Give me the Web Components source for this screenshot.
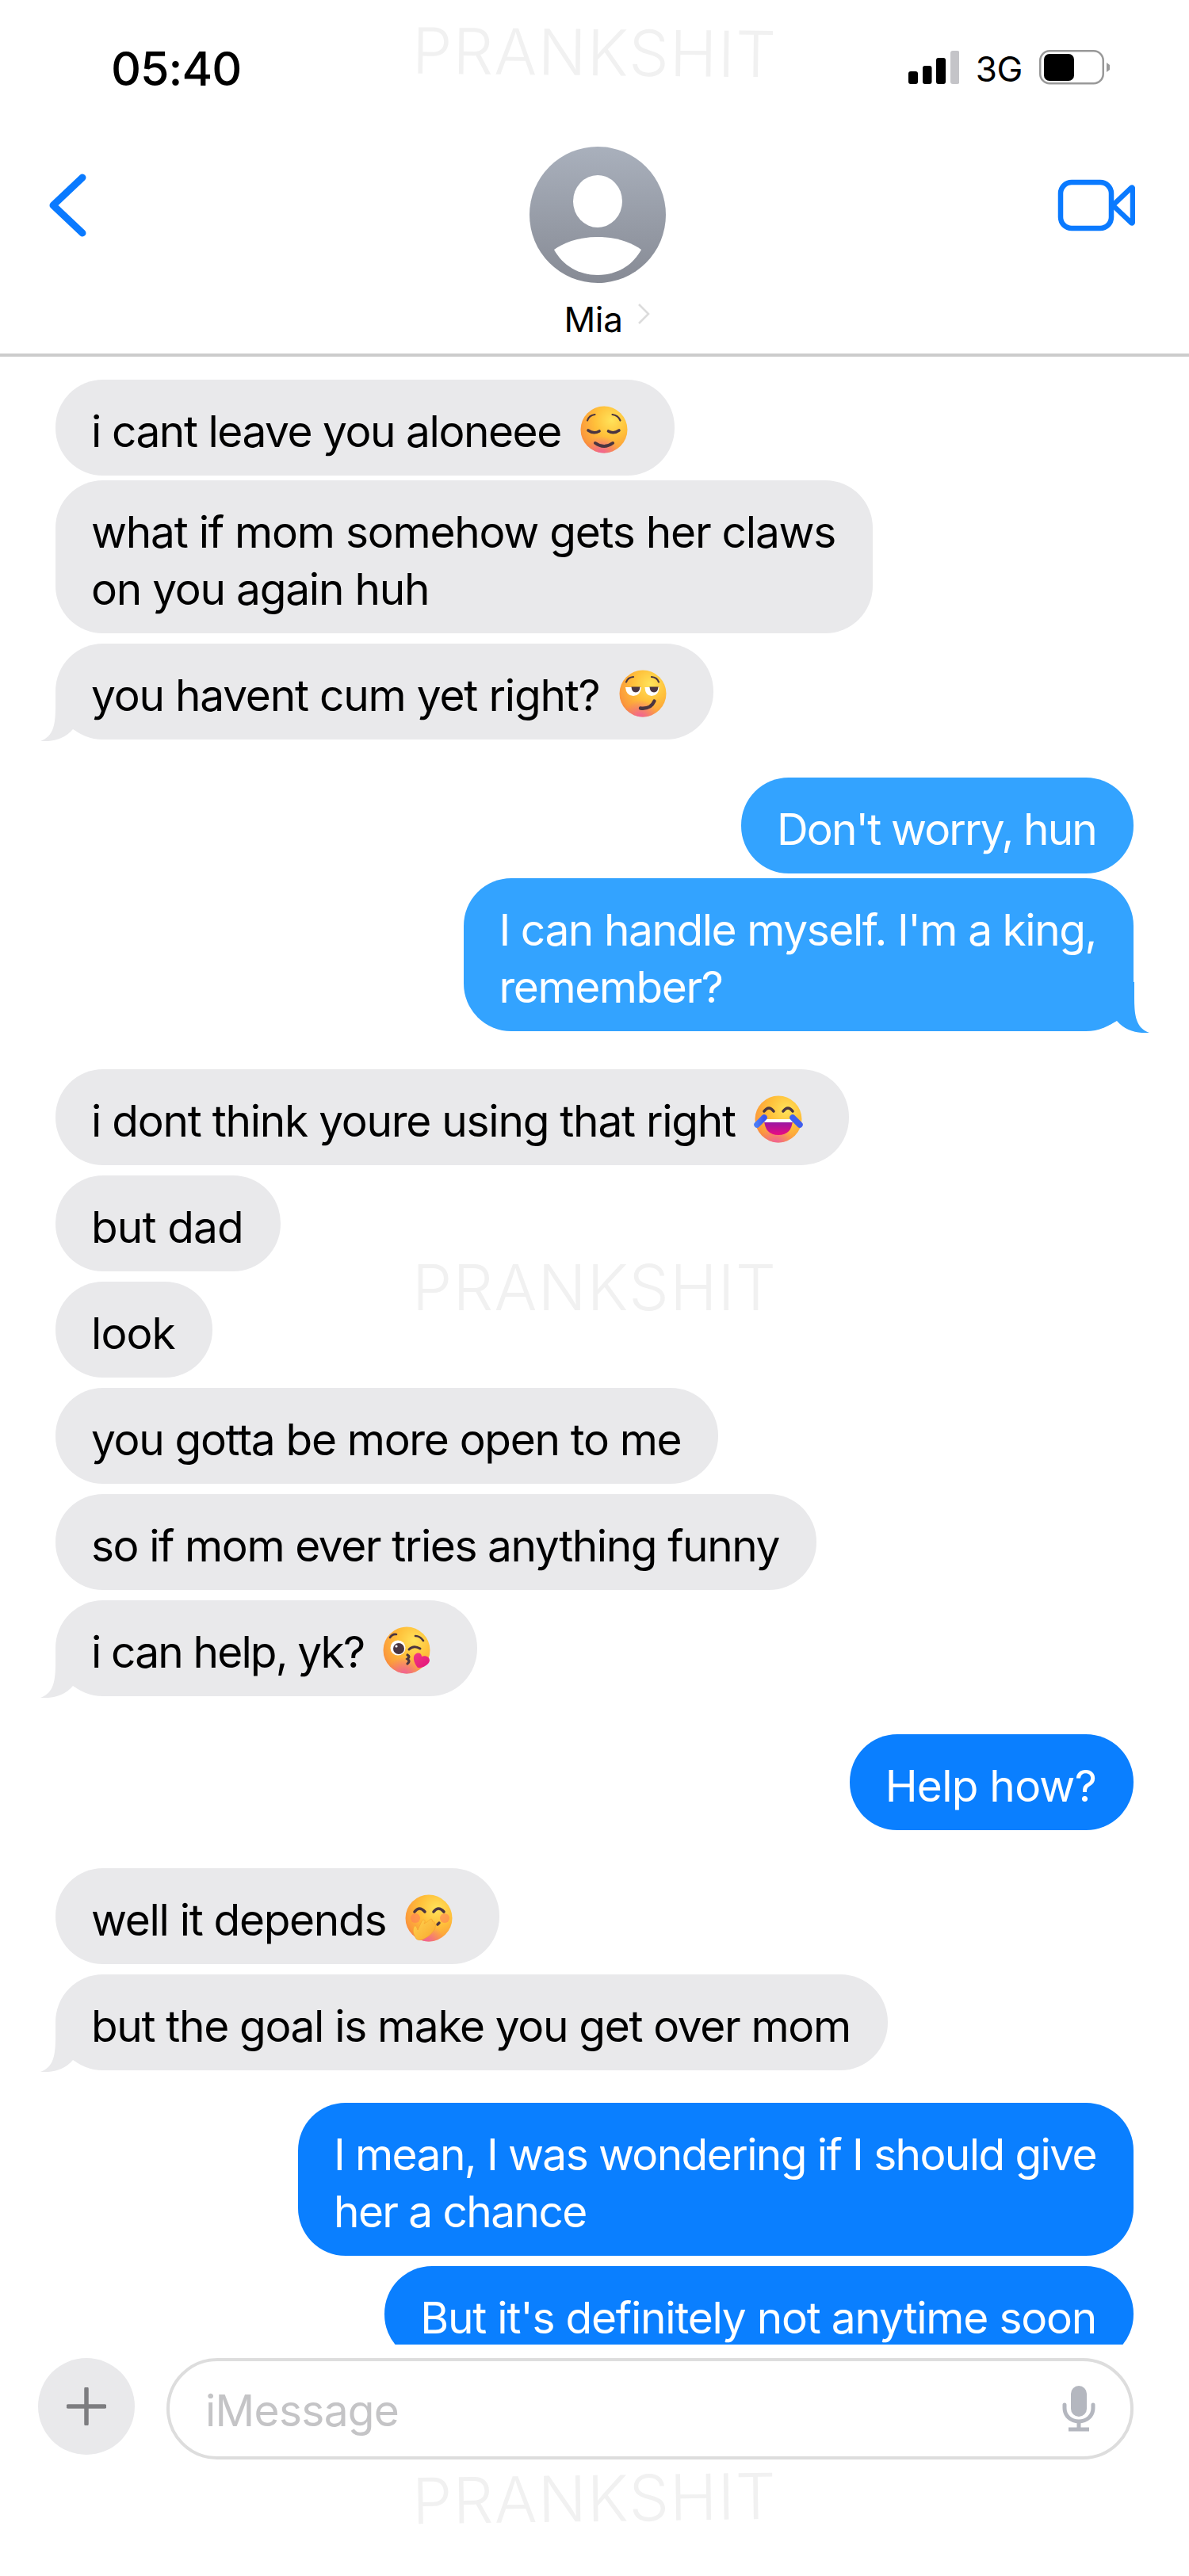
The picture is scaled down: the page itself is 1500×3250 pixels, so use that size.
<!DOCTYPE html>
<html><head><meta charset="utf-8"><title>iMessage</title>
<style>
html,body{margin:0;padding:0;background:#fff}
body{font-family:Inter,"Liberation Sans",sans-serif}
</style></head><body>
<imsg-app>
<imsg-bubble from="them" gap="0" style="--ls:-1.45px">i cant leave you aloneee <imsg-emoji name="relieved"></imsg-emoji></imsg-bubble>
<imsg-bubble from="them" gap="6" style="--ls:-1.24px">what if mom somehow gets her claws<br>on you again huh</imsg-bubble>
<imsg-bubble from="them" gap="13" tail style="--ls:-1.2px">you havent cum yet right? <imsg-emoji name="smirk"></imsg-emoji></imsg-bubble>
<imsg-bubble from="me" gap="48" shade="light" style="--ls:-1.85px">Don't worry, hun</imsg-bubble>
<imsg-bubble from="me" gap="6" shade="light" tail style="--ls:-1.44px">I can handle myself. I'm a king,<br>remember?</imsg-bubble>
<imsg-bubble from="them" gap="48" style="--ls:-1.25px">i dont think youre using that right <imsg-emoji name="laugh"></imsg-emoji></imsg-bubble>
<imsg-bubble from="them" gap="13" style="--ls:-.85px">but dad</imsg-bubble>
<imsg-bubble from="them" gap="13" style="--ls:-.9px">look</imsg-bubble>
<imsg-bubble from="them" gap="13" style="--ls:-1.32px">you gotta be more open to me</imsg-bubble>
<imsg-bubble from="them" gap="13" style="--ls:-1.42px">so if mom ever tries anything funny</imsg-bubble>
<imsg-bubble from="them" gap="13" tail style="--ls:-1.85px">i can help, yk? <imsg-emoji name="kiss"></imsg-emoji></imsg-bubble>
<imsg-bubble from="me" gap="48" style="--ls:-.75px">Help how?</imsg-bubble>
<imsg-bubble from="them" gap="48" style="--ls:-1.3px">well it depends <imsg-emoji name="shush"></imsg-emoji></imsg-bubble>
<imsg-bubble from="them" gap="13" tail style="--ls:-1.34px">but the goal is make you get over mom</imsg-bubble>
<imsg-bubble from="me" gap="41" style="--ls:-1.6px">I mean, I was wondering if I should give<br>her a chance</imsg-bubble>
<imsg-bubble from="me" gap="13" style="--ls:-1.22px">But it's definitely not anytime soon</imsg-bubble>
</imsg-app>
<script>
const faceDefs=`<defs>
<radialGradient id="f" cx="66%" cy="30%" r="80%"><stop offset="0" stop-color="#ffe35a"/><stop offset=".45" stop-color="#ffc03a"/><stop offset=".85" stop-color="#fb9a3c"/><stop offset="1" stop-color="#f6803f"/></radialGradient>
<radialGradient id="p" cx="45%" cy="102%" r="38%"><stop offset="0" stop-color="#f0609a"/><stop offset="1" stop-color="#f0609a" stop-opacity="0"/></radialGradient>
<linearGradient id="m" x1="0" y1="0" x2="0" y2="1"><stop offset="0" stop-color="#8a1aa8"/><stop offset="1" stop-color="#ea0a82"/></linearGradient>
<linearGradient id="h" x1="0" y1="0" x2="1" y2="1"><stop offset="0" stop-color="#f23a80"/><stop offset="1" stop-color="#e2127a"/></linearGradient>
<linearGradient id="t" x1="0" y1="0" x2="1" y2="0"><stop offset="0" stop-color="#4a7bf5"/><stop offset="1" stop-color="#3b55ee"/></linearGradient>
<linearGradient id="g" x1="0" y1="0" x2="1" y2="1"><stop offset="0" stop-color="#ffd250"/><stop offset="1" stop-color="#f8a92e"/></linearGradient>
</defs><circle cx="30" cy="30" r="29.5" fill="url(#f)"/><circle cx="30" cy="30" r="29.5" fill="url(#p)"/>`;
const D='#4a3540';
const arc=(d,w=3.4)=>`<path d="${d}" fill="none" stroke="${D}" stroke-width="${w}" stroke-linecap="round"/>`;
const FACES={
relieved:arc('M9 18.500Q11 12 18.500 11',2.2)+arc('M40.500 11Q48 12 50.500 18.500',2.2)+arc('M10 31Q17 36 24 32',3.6)+arc('M35.500 32Q42 36 49 31',3.6)+arc('M19 47Q30 55 41 47',4),
smirk:arc('M9 15.500Q11 9.500 18 9',2.2)+arc('M41 9Q48 9.500 50 15.500',2.2)+
 `<path d="M8 22H28Q27 33 18 33Q9 33 8 22Z" fill="#fff"/><path d="M32.500 22H50.500Q50 33 41 33Q33 33 32.500 22Z" fill="#fff"/><path d="M15.500 21.500H26.500Q26 28.500 21 28.500Q16 28.500 15.500 21.500Z" fill="${D}"/><path d="M38.500 21.500H49.500Q49 28.500 44 28.500Q39 28.500 38.500 21.500Z" fill="${D}"/>`+arc('M27 48.500Q40 50 44.500 39.500',4.4),
laugh:arc('M12 20Q18 12 24 20',3.6)+arc('M36 20Q42 12 48 20',3.6)+
 `<path d="M12 31H48Q47 50 30 50Q13 50 12 31Z" fill="url(#m)"/><path d="M12 30H48L47.6 34H12.4Z" fill="#fff"/>`+
 `<path d="M3 37L12 28" stroke="url(#t)" stroke-width="7.5" stroke-linecap="round"/><path d="M57 37L48 28" stroke="#3f5eee" stroke-width="7.5" stroke-linecap="round"/>`,
kiss:arc('M9 14Q12 9 17 10',2.6)+arc('M41 12Q47 12 51 18',2.6)+
 `<circle cx="19" cy="27" r="9.5" fill="#fff"/><circle cx="20" cy="28" r="7" fill="${D}"/><circle cx="17" cy="25" r="1.6" fill="#fff"/>`+arc('M33 29Q39 23 47 28',3)+arc('M31 36Q35 38 31 41Q35 44 31 47',3.2)+
 `<path d="M41 35C45 32 49 34 49 38C53 36 59 38 59 43C58 49 49 53 44 52C39 46 37 38 41 35Z" fill="url(#h)"/>`,
shush:`<circle cx="13" cy="30" r="6" fill="#ff7a5a" opacity=".55"/><circle cx="50" cy="30" r="6" fill="#ff7a5a" opacity=".55"/>`+arc('M12 22Q18 14 25 22',3.6)+arc('M36 22Q42 14 49 22',3.6)+arc('M41 38L43 36',3.4)+
 `<path d="M14 56C10 50 9 44 12 40C14 39 15 42 16 45L21 34C22 31 26 32 25 35L24 37C26 36 29 34 31 32C33 30 36 32 34 34C36 34 38 35 37 37C39 37 39 40 38 41C38 43 38 44 36 46C33 50 29 54 22 57C19 58 16 58 14 56Z" fill="url(#g)" stroke="#f3a02b" stroke-width=".6"/>`
};
class ImsgEmoji extends HTMLElement{connectedCallback(){
 const r=this.shadowRoot||this.attachShadow({mode:'open'});
 r.innerHTML=`<style>:host{display:inline-block;width:60px;height:60px;margin:0 12px 0 10px;vertical-align:-8px;letter-spacing:0}svg{display:block;overflow:visible}</style><svg width="60" height="60" viewBox="0 0 60 60" role="img" aria-label="${this.getAttribute('name')}">${faceDefs}${FACES[this.getAttribute('name')]}</svg>`;
}}
customElements.define('imsg-emoji',ImsgEmoji);

class ImsgBubble extends HTMLElement{connectedCallback(){
 if(this.shadowRoot)return;
 const r=this.attachShadow({mode:'open'});
 this.style.marginTop=(this.getAttribute('gap')||0)+'px';
 const tailSvg=`<svg class="tail" width="50" height="64" viewBox="0 0 50 64"><path d="M19 0V20C19 42 17 58 0 64C14 65 30 62 41 49L50 54V0Z"/></svg>`;
 r.innerHTML=`<style>
 :host{display:block;position:relative;flex:none;box-sizing:border-box;max-width:max-content;background:var(--b);color:var(--c);border-radius:60px;padding:29px 47px 20px 45px;font:400 55px/72px Inter,"Liberation Sans",sans-serif;letter-spacing:var(--ls,-1.3px);white-space:nowrap}
 :host([from=them]){--b:#e9e9eb;--c:#000;align-self:flex-start}
 :host([from=me]){--b:#0a7fff;--c:#fff;align-self:flex-end}
 :host([shade=light]){--b:#33a3ff}
 .tail{position:absolute;bottom:-2px;left:-19px;fill:var(--b)}
 :host([from=me]) .tail{left:auto;right:-20px;transform:scaleX(-1)}
 </style><slot></slot>${this.hasAttribute('tail')?tailSvg:''}`;
}}
customElements.define('imsg-bubble',ImsgBubble);

class ImsgStatus extends HTMLElement{constructor(){super();this.attachShadow({mode:'open'}).innerHTML=`<style>
 :host{display:flex;align-items:flex-start;justify-content:space-between;height:130px;box-sizing:border-box;padding:60px 100px 0 140px}
 .t{font:500 59px/54px Inter,"Liberation Sans",sans-serif;letter-spacing:-1px;color:#000}
 .r{display:flex;align-items:flex-start;gap:21px;margin-top:3px}
 .n{font:400 44px/44px Inter,"Liberation Sans",sans-serif;margin-top:2px;letter-spacing:-.4px;color:#000}
 svg{display:block}
 </style><div class="t">05:40</div><div class="r">
 <svg style="margin-top:1px" width="64" height="42" viewBox="0 0 64 42"><rect x="0" y="26" width="12" height="16" rx="3"/><rect x="18" y="19" width="11.500" height="23" rx="3"/><rect x="35" y="9" width="12" height="33" rx="3"/><rect x="53" y="0" width="11.500" height="42" rx="3" fill="#c4c4c8"/></svg>
 <div class="n">3G</div>
 <svg width="89" height="44" viewBox="0 0 89 44"><rect x="1.250" y="1.250" width="79.500" height="41" rx="12" fill="#fff" stroke="#999" stroke-width="2.500"/><rect x="6" y="5" width="38" height="34" rx="7"/><path d="M85 16L89 19V25L85 28Z" fill="#999"/></svg>
 </div>`;}}
customElements.define('imsg-status',ImsgStatus);

class ImsgNav extends HTMLElement{constructor(){super();this.attachShadow({mode:'open'}).innerHTML=`<style>
 :host{display:flex;justify-content:space-between;align-items:flex-start;box-sizing:border-box;padding:55px 68px 0 60px;border-bottom:4px solid #ccc;height:320px}
 .c{display:flex;flex-direction:column;align-items:center;margin-left:64px}
 .name{display:flex;align-items:flex-start;font:400 44px/44px Inter,"Liberation Sans",sans-serif;letter-spacing:-.3px;color:#000;margin-top:24px;margin-left:24px}
 .name svg{margin:1px 0 0 17px}
 .back{margin-top:34px}.vid{margin-top:41px}
 svg{display:block}
 </style>
 <svg class="back" width="50" height="80" viewBox="0 0 50 80"><path d="M44 5L7 40L44 75" fill="none" stroke="#0a7aff" stroke-width="9" stroke-linecap="round" stroke-linejoin="round"/></svg>
 <div class="c">
 <svg width="172" height="172" viewBox="0 0 172 172"><defs><linearGradient id="a" x1="0" y1="0" x2="0" y2="1"><stop offset="0" stop-color="#a9b0bc"/><stop offset="1" stop-color="#878b95"/></linearGradient></defs><circle cx="86" cy="86" r="86" fill="url(#a)"/><ellipse cx="86" cy="69" rx="31" ry="33" fill="#fff"/><path d="M31 130C42 122 60 114 86 114C112 114 130 122 141 130C130 150 110 162 86 162C62 162 42 150 31 130Z" fill="#fff"/></svg>
 <div class="name"><span>Mia</span><svg width="18" height="28" viewBox="0 0 18 28"><path d="M3 2L15 14L3 26" fill="none" stroke="#dcdcdc" stroke-width="2.6"/></svg></div>
 </div>
 <svg class="vid" width="98" height="66" viewBox="0 0 98 66"><rect x="4" y="4" width="64" height="58" rx="14" fill="none" stroke="#0a7aff" stroke-width="6.5"/><path d="M70 33L93 11Q95 9.500 95 13V53Q95 56.500 93 55L70 33Z" fill="none" stroke="#0a7aff" stroke-width="6.500" stroke-linejoin="round"/></svg>`;}}
customElements.define('imsg-nav',ImsgNav);

class ImsgComposer extends HTMLElement{constructor(){super();this.attachShadow({mode:'open'}).innerHTML=`<style>
 :host{display:flex;gap:40px;align-items:flex-start;padding:17px 70px 0 48px}
 .plus{width:122px;height:122px;border-radius:50%;background:#e9e9eb;display:flex;align-items:center;justify-content:center;flex:none}
 .box{flex:1;height:128px;box-sizing:border-box;border:4px solid #ddd;border-radius:64px;display:flex;align-items:center;justify-content:space-between;padding:0 44px 0 45px}
 .ph{font:400 55px/72px Inter,"Liberation Sans",sans-serif;letter-spacing:-.7px;color:#c4c4c6;position:relative;top:2px}
 svg{display:block}
 </style><div class="plus"><svg width="50" height="48" viewBox="0 0 50 48"><path d="M25 2V46M2 24H48" stroke="#7d7d80" stroke-width="5.500" stroke-linecap="round"/></svg></div>
 <div class="box"><span class="ph">iMessage</span><svg width="42" height="58" viewBox="0 0 42 58"><rect x="11" y="0" width="20" height="39" rx="10" fill="#b4b7bf"/><path d="M3 24V28C3 38 11 45 21 45C31 45 39 38 39 28V24" fill="none" stroke="#b4b7bf" stroke-width="5" stroke-linecap="round"/><path d="M21 45V53M8 55H34" stroke="#b4b7bf" stroke-width="5"/></svg></div>`;}}
customElements.define('imsg-composer',ImsgComposer);

class ImsgWatermark extends HTMLElement{constructor(){super();this.attachShadow({mode:'open'}).innerHTML=`<style>
 :host{position:absolute;left:520px;display:block;font:300 80px/80px Inter,"Liberation Sans",sans-serif;letter-spacing:1.3px;color:#f1f1f1;white-space:nowrap;pointer-events:none}
 </style>PRANKSHIT`;}}
customElements.define('imsg-watermark',ImsgWatermark);

class ImsgApp extends HTMLElement{constructor(){super();this.attachShadow({mode:'open'}).innerHTML=`<style>
 :host{display:block;position:relative;width:1500px;height:3250px;background:#fff;overflow:hidden}
 .thread{display:flex;flex-direction:column;height:2508px;box-sizing:border-box;padding:29px 70px 0 70px;overflow:hidden}
 </style>
 <imsg-status></imsg-status><imsg-nav></imsg-nav>
 <div class="thread"><slot></slot></div>
 <imsg-composer></imsg-composer>
 <imsg-watermark style="top:26px;transform:rotate(.6deg)"></imsg-watermark>
 <imsg-watermark style="top:1584px"></imsg-watermark>
 <imsg-watermark style="top:3112px;transform:rotate(-.8deg)"></imsg-watermark>`;}}
customElements.define('imsg-app',ImsgApp);
</script></body></html>
